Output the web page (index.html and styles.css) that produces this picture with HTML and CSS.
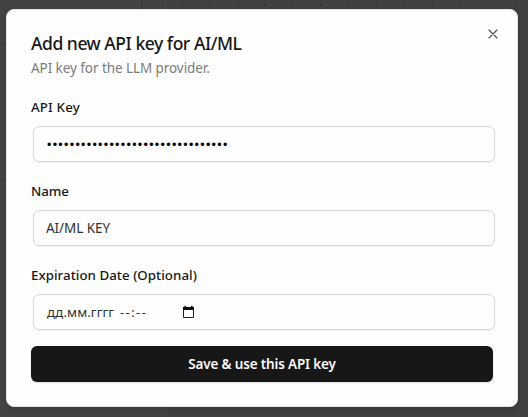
FILE: index.html
```
<!DOCTYPE html>
<html lang="en">
<head>
<meta charset="utf-8">
<title>Add new API key</title>
<link rel="stylesheet" href="styles.css">
</head>
<body>
<main class="dialog">
  <header class="header">
    <h1 class="title">Add new API key for AI/ML</h1>
    <p class="description">API key for the LLM provider.</p>
  </header>
  <form class="form">
    <div class="field">
      <div class="label label-key">API Key</div>
      <div class="input"><span class="dots">••••••••••••••••••••••••••••••••</span></div>
    </div>
    <div class="field">
      <div class="label label-name">Name</div>
      <div class="input"><span class="value">AI/ML KEY</span></div>
    </div>
    <div class="field">
      <div class="label label-date">Expiration Date (Optional)</div>
      <div class="input"><span class="date">дд.мм.гггг</span><span class="time">--:--</span>
        <svg class="calendar" width="13" height="14" viewBox="0 0 13 14"><path d="M1.5 3.5h10v9h-10z" fill="none" stroke="#222"/><path d="M1 2h11v3H1zM2.5 .8h1.4V2H2.5zM9.1 .8h1.4V2H9.1z" fill="#0a0a0a"/></svg>
      </div>
    </div>
    <button class="submit" type="button">Save &amp; use this API key</button>
  </form>
  <button class="close" type="button" aria-label="Close"><svg width="16" height="16" viewBox="0 0 24 24" fill="none" stroke="#4d4d4d" stroke-width="1.7" stroke-linecap="round"><path d="M18 6 6 18M6 6l12 12"/></svg></button>
</main>
</body>
</html>
```
FILE: styles.css
```
* { box-sizing: border-box; }
body {
  margin: 0;
  height: 417px;
  padding: 9px 10px 10px 6px;
  overflow: hidden;
  color: #171717;
  font-family: "Noto Sans", "Open Sans", sans-serif;
  background-color: #404040;
  background-image:
    linear-gradient(#393939, #393939),
    linear-gradient(#393939, #393939),
    linear-gradient(#393939, #393939),
    linear-gradient(#434343, #434343),
    radial-gradient(circle, #303030 0.8px, transparent 1.4px);
  background-size: 1px 10px, 6px 1px, 6px 1px, 167px 100%, 27.9px 28px;
  background-position: 141px 0, 0 44px, 0 180px, 0 0, 167.5px -9px;
  background-repeat: no-repeat, no-repeat, no-repeat, no-repeat, repeat-x;
}
.dialog {
  position: relative;
  height: 398px;
  padding: 24px;
  border: 1px solid #e5e5e5;
  border-radius: 8px;
  background: #fefefe;
  box-shadow: 0 4px 6px #0002;
}
.header { height: 60px; }
.title {
  margin: 0;
  height: 22px;
  line-height: 19px;
  font-size: 17.5px;
  font-weight: 500;
  letter-spacing: -0.46px;
  white-space: nowrap;
}
.description {
  margin: 0;
  height: 24px;
  line-height: 24px;
  font-size: 13.5px;
  letter-spacing: -0.07px;
  color: #7b7b7b;
}
.form { display: flex; flex-direction: column; }
.field { height: 84px; }
.label {
  height: 32px;
  line-height: 26px;
  font-size: 13.3px;
  font-weight: 500;
}
.label-key { letter-spacing: 0.15px; }
.label-name { letter-spacing: -0.05px; }
.label-date { letter-spacing: 0.04px; }
.input {
  display: flex;
  align-items: center;
  height: 36px;
  margin: 0 -2px 0 2px;
  padding: 0 12px;
  border: 1px solid #d6d6d6;
  border-radius: 6px;
  box-shadow: 0 1px 2px #0000000d;
  font-size: 14px;
  white-space: pre;
}
.dots { padding: 1px 0 0 1px; color: #000; font: 12.5px "Liberation Sans", sans-serif; letter-spacing: 1.3px; }
.value { font-size: 13.5px; letter-spacing: -0.05px; color: #303030; }
.date { width: 74px; padding-left: 1px; font-size: 13px; letter-spacing: 0.1px; color: #303030; }
.time { width: 62px; font-size: 13px; letter-spacing: 1.4px; color: #303030; }
.submit {
  height: 36px;
  border: 0;
  border-radius: 6px;
  background: #171717;
  color: #fafafa;
  font: 600 13.5px/36px "Noto Sans", "Open Sans", sans-serif;
  letter-spacing: -0.17px;
  padding: 0;
  box-shadow: 0 1px 2px #0002;
}
.close {
  position: absolute;
  top: 16px;
  right: 16px;
  width: 16px;
  height: 16px;
  padding: 0;
  border: 0;
  background: none;
}
.close svg, .calendar { display: block; }
```
